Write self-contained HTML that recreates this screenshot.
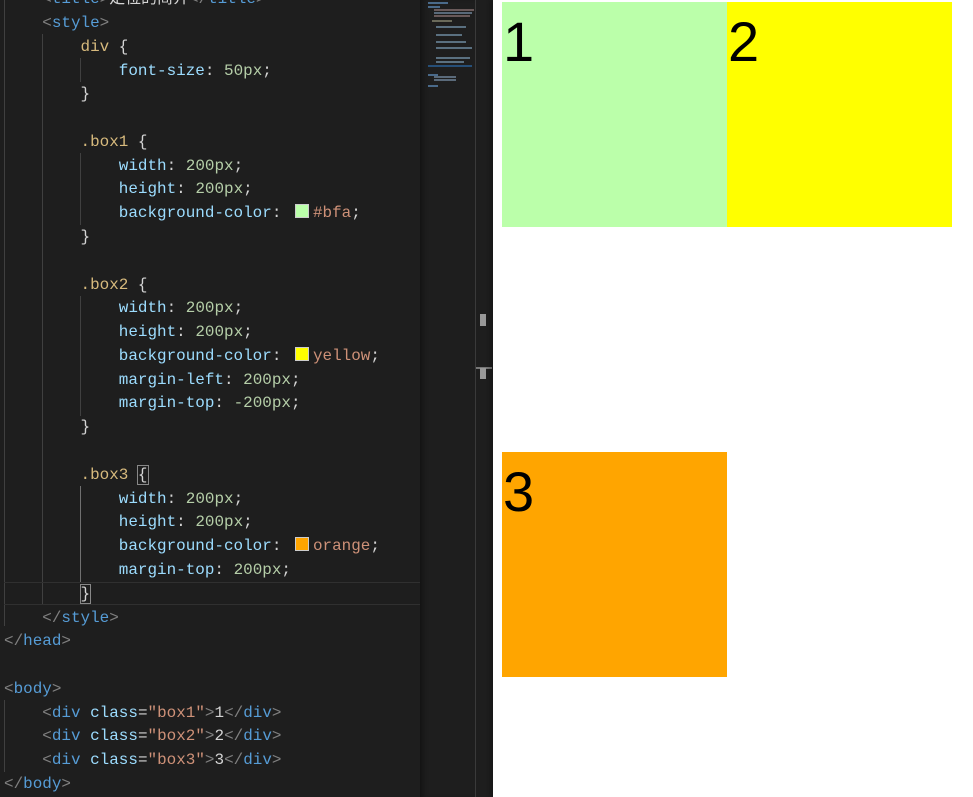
<!DOCTYPE html>
<html><head><meta charset="utf-8"><style>
html,body{margin:0;padding:0;}
body{width:973px;height:797px;overflow:hidden;position:relative;background:#1e1e1e;}
#ed{position:absolute;left:0;top:0;width:420px;height:797px;background:#1e1e1e;overflow:hidden;}
pre{position:absolute;left:4px;top:-11.8px;margin:0;font-family:"Liberation Mono","Noto Sans CJK SC",monospace;font-size:15.95px;line-height:23.78px;color:#d4d4d4;white-space:pre;}
.t{color:#808080}.n{color:#569cd6}.s{color:#d7ba7d}.p{color:#9cdcfe}.v{color:#b5cea8}.st{color:#ce9178}
.sw{display:inline-block;width:12px;height:12px;border:1px solid #ccc;margin:0 4px 0 4px;vertical-align:-1px;}
.g{position:absolute;width:1px;background:#404040;}
#mm{position:absolute;left:420px;top:0;width:55px;height:797px;background:#1e1e1e;box-shadow:inset 6px 0 6px -4px #111;}
#sb{position:absolute;left:475px;top:0;width:17px;height:797px;background:#1e1e1e;border-left:1px solid #3a3a3a;}
#pg{position:absolute;left:493px;top:0;width:480px;height:797px;background:#fff;box-shadow:-3px 0 4px rgba(0,0,0,.25);}
.b{position:absolute;width:225px;height:225px;font-family:"Liberation Sans",sans-serif;font-size:56px;line-height:80px;color:#000;padding-left:1px;box-sizing:border-box;}
.ml{position:absolute;height:2px;}
</style></head><body>
<div id="ed">
<div class="g" style="left:4px;top:0;height:626px"></div>
<div class="g" style="left:42px;top:34px;height:570px"></div>
<div class="g" style="left:80px;top:58px;height:24px"></div>
<div class="g" style="left:80px;top:153px;height:72px"></div>
<div class="g" style="left:80px;top:296px;height:120px"></div>
<div class="g" style="left:80px;top:486px;height:96px;background:#707070"></div>
<div class="g" style="left:4px;top:700px;height:72px"></div>
<div style="position:absolute;left:4px;top:582px;width:416px;height:21px;border-top:1px solid #303030;border-bottom:1px solid #303030"></div>
<pre><span class="t">    &lt;</span><span class="n">title</span><span class="t">&gt;</span>定位的简介<span class="t">&lt;/</span><span class="n">title</span><span class="t">&gt;</span>
<span class="t">    &lt;</span><span class="n">style</span><span class="t">&gt;</span>
        <span class="s">div</span> {
            <span class="p">font-size</span>: <span class="v">50px</span>;
        }

        <span class="s">.box1</span> {
            <span class="p">width</span>: <span class="v">200px</span>;
            <span class="p">height</span>: <span class="v">200px</span>;
            <span class="p">background-color</span>: <span class="sw" style="background:#bfa"></span><span class="st">#bfa</span>;
        }

        <span class="s">.box2</span> {
            <span class="p">width</span>: <span class="v">200px</span>;
            <span class="p">height</span>: <span class="v">200px</span>;
            <span class="p">background-color</span>: <span class="sw" style="background:#ff0"></span><span class="st">yellow</span>;
            <span class="p">margin-left</span>: <span class="v">200px</span>;
            <span class="p">margin-top</span>: <span class="v">-200px</span>;
        }

        <span class="s">.box3</span> <span style="outline:1px solid #888">{</span>
            <span class="p">width</span>: <span class="v">200px</span>;
            <span class="p">height</span>: <span class="v">200px</span>;
            <span class="p">background-color</span>: <span class="sw" style="background:#ffa500"></span><span class="st">orange</span>;
            <span class="p">margin-top</span>: <span class="v">200px</span>;
        <span style="outline:1px solid #888">}</span>
<span class="t">    &lt;/</span><span class="n">style</span><span class="t">&gt;</span>
<span class="t">&lt;/</span><span class="n">head</span><span class="t">&gt;</span>

<span class="t">&lt;</span><span class="n">body</span><span class="t">&gt;</span>
<span class="t">    &lt;</span><span class="n">div</span> <span class="p">class</span>=<span class="st">"box1"</span><span class="t">&gt;</span>1<span class="t">&lt;/</span><span class="n">div</span><span class="t">&gt;</span>
<span class="t">    &lt;</span><span class="n">div</span> <span class="p">class</span>=<span class="st">"box2"</span><span class="t">&gt;</span>2<span class="t">&lt;/</span><span class="n">div</span><span class="t">&gt;</span>
<span class="t">    &lt;</span><span class="n">div</span> <span class="p">class</span>=<span class="st">"box3"</span><span class="t">&gt;</span>3<span class="t">&lt;/</span><span class="n">div</span><span class="t">&gt;</span>
<span class="t">&lt;/</span><span class="n">body</span><span class="t">&gt;</span></pre>
</div>
<div id="mm">
<div class="ml" style="left:8px;top:2px;width:20px;background:#4a6a8a"></div>
<div class="ml" style="left:8px;top:6px;width:12px;background:#4a6a8a"></div>
<div class="ml" style="left:14px;top:9px;width:40px;background:#6a5a5a"></div>
<div class="ml" style="left:14px;top:12px;width:38px;background:#5a6a7a"></div>
<div class="ml" style="left:14px;top:15px;width:36px;background:#6a5a5a"></div>
<div class="ml" style="left:12px;top:20px;width:20px;background:#6a6a5a"></div>
<div class="ml" style="left:16px;top:26px;width:30px;background:#5a7080"></div>
<div class="ml" style="left:16px;top:34px;width:26px;background:#5a7080"></div>
<div class="ml" style="left:16px;top:41px;width:30px;background:#5a7080"></div>
<div class="ml" style="left:16px;top:47px;width:36px;background:#5a7080"></div>
<div class="ml" style="left:16px;top:57px;width:34px;background:#5a7080"></div>
<div class="ml" style="left:16px;top:61px;width:28px;background:#5a7080"></div>
<div class="ml" style="left:8px;top:65px;width:44px;background:#264f78"></div>
<div class="ml" style="left:8px;top:74px;width:10px;background:#4a6a8a"></div>
<div class="ml" style="left:14px;top:76px;width:22px;background:#5a6a7a"></div>
<div class="ml" style="left:14px;top:79px;width:22px;background:#5a6a7a"></div>
<div class="ml" style="left:8px;top:85px;width:10px;background:#4a6a8a"></div>
</div>
<div id="sb">
<div style="position:absolute;left:4px;top:314px;width:6px;height:12px;background:#999"></div>
<div style="position:absolute;left:0;top:367px;width:16px;height:2px;background:#777"></div>
<div style="position:absolute;left:4px;top:368px;width:6px;height:11px;background:#999"></div>
</div>
<div id="pg">
<div class="b" style="left:9px;top:2px;background:#bfa">1</div>
<div class="b" style="left:234px;top:2px;background:#ff0">2</div>
<div class="b" style="left:9px;top:452px;background:#ffa500">3</div>
</div>
</body></html>
